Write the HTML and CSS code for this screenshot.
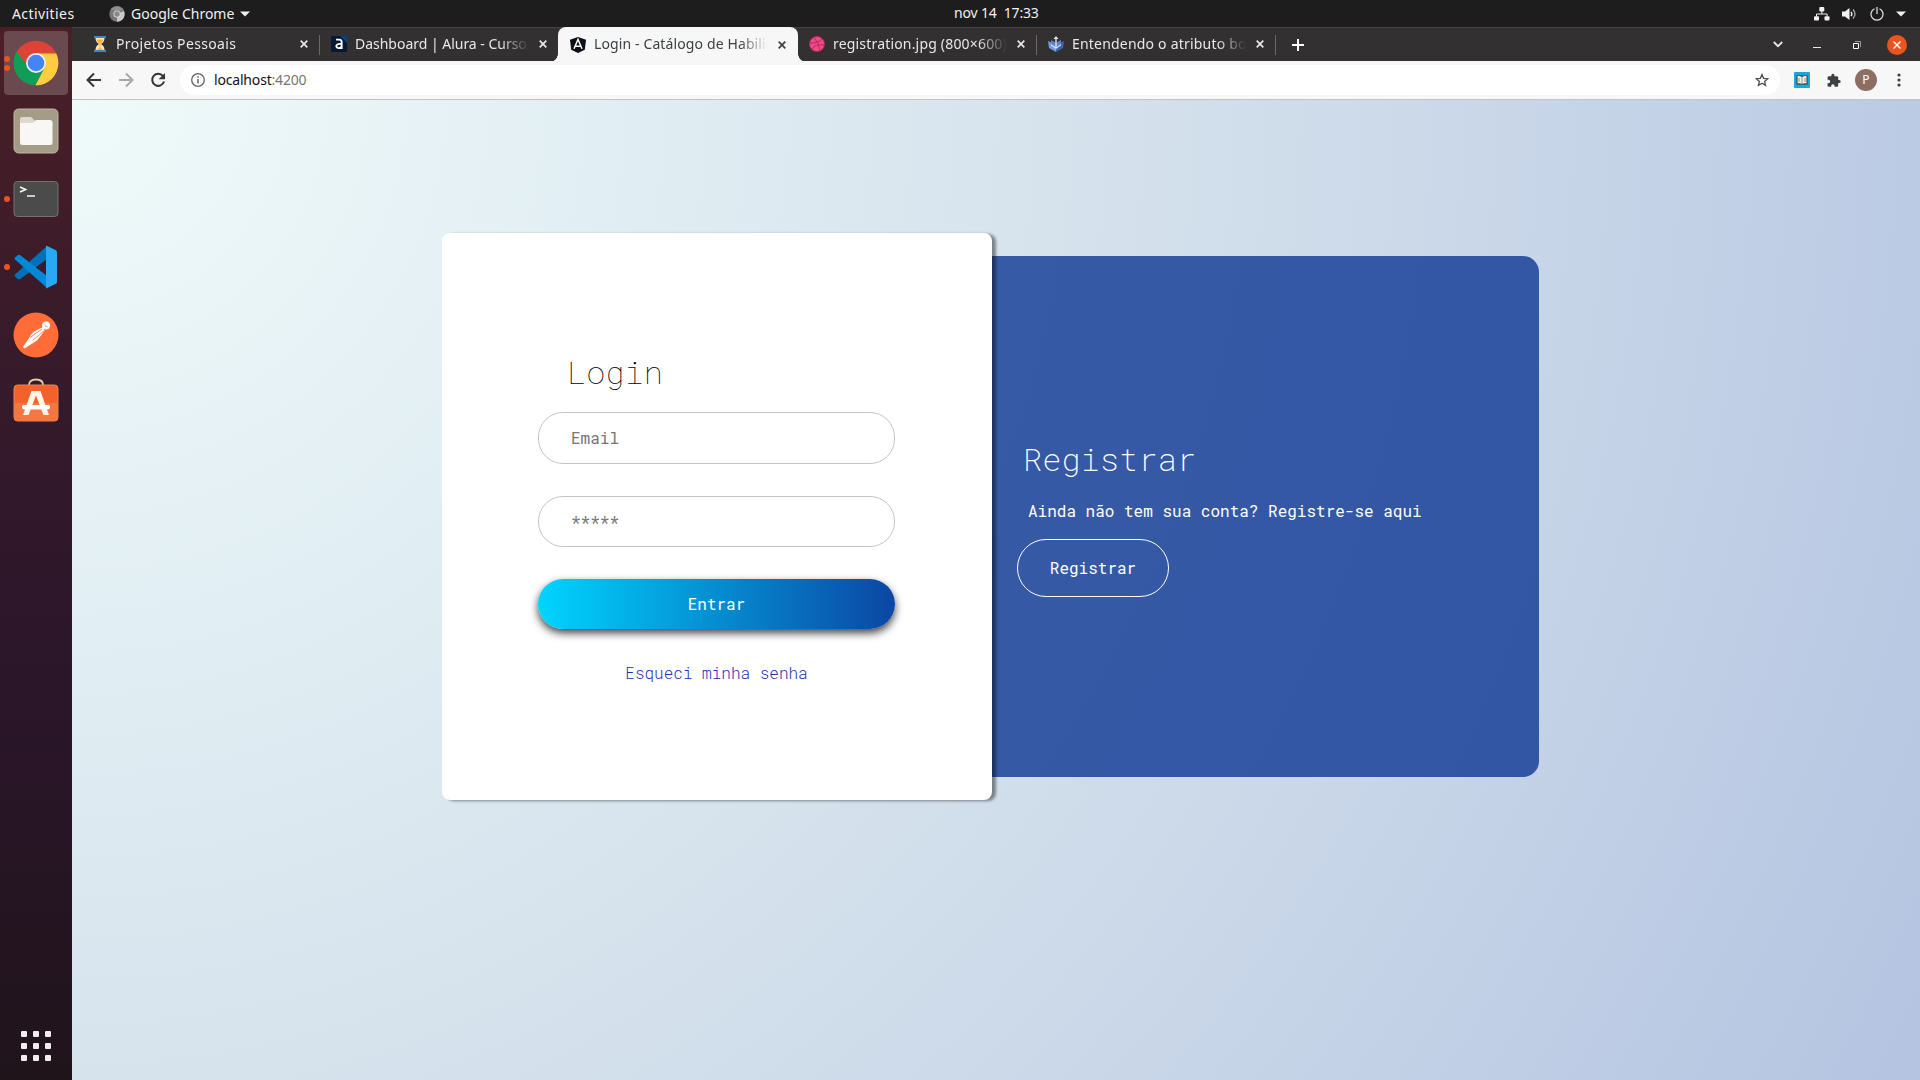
FILE: index.html
```html
<!DOCTYPE html>
<html lang="pt-BR">
<head>
<meta charset="utf-8">
<title>Login - Catálogo de Habilidades</title>
<link rel="stylesheet" href="styles.css">
</head>
<body>
<div class="desktop">
  <header class="topbar">
    <div class="topbar-left">
      <span class="activities">Activities</span>
      <svg class="app-icon" width="16" height="16" viewBox="0 0 16 16"><circle cx="8" cy="8" r="7.7" fill="#777"/><path d="M8 8 15 5A7.7 7.7 0 0 1 8 15.7z" fill="#c9c9c9"/><path d="M1.3 4.2A7.7 7.7 0 0 1 15 4.5H8z" fill="#8e8e8e"/><circle cx="8" cy="8" r="3.6" fill="#ddd"/><circle cx="8" cy="8" r="2.7" fill="#888"/></svg>
      <span class="app-name">Google Chrome</span>
      <svg class="caret" width="10" height="6" viewBox="0 0 10 6"><path d="M0 .5h10L5 5.5z" fill="#f2f2f2"/></svg>
    </div>
    <div class="clock">nov 14&nbsp; 17:33</div>
    <div class="topbar-right">
      <svg width="16" height="14" viewBox="0 0 16 14"><g fill="#f2f2f2"><rect x="5.3" y="0" width="5" height="4.5" rx="1"/><rect x="0" y="9.2" width="5" height="4.4" rx="1"/><rect x="10.5" y="9.2" width="5" height="4.4" rx="1"/></g><path d="M7.8 4v3M2.5 9.5V7h10.6v2.5" fill="none" stroke="#f2f2f2"/></svg>
      <svg width="16" height="14" viewBox="0 0 16 14"><path d="M0 4.5h3L7.5 1v12L3 9.5H0z" fill="#f2f2f2"/><path d="M9 4.8q1.7 2.2 0 4.4" fill="none" stroke="#f2f2f2" stroke-width="1.3"/><path d="M11 2.5q4 4.5 0 9" fill="none" stroke="#aaa" stroke-width="1.3"/></svg>
      <svg width="14" height="14" viewBox="0 0 14 14"><path d="M4.5 1.7a6 6 0 1 0 5 0M7 0v7" fill="none" stroke="#e6e6e6" stroke-width="1.2"/></svg>
      <svg width="10" height="6" viewBox="0 0 10 6"><path d="M0 .5h10L5 5.5z" fill="#f2f2f2"/></svg>
    </div>
  </header>

  <div class="workspace">
    <nav class="dock">
      <div class="dock-item dock-active">
        <span class="dots"><i></i><i></i></span>
        <svg width="46" height="46" viewBox="0 0 46 46"><circle cx="23" cy="23" r="22.3" fill="#db4437"/><path d="M3.7 11.8A22.3 22.3 0 0 0 22.5 45.3L31.5 29 15 26.5z" fill="#0f9d58"/><path d="M23 13.5H43.2A22.3 22.3 0 0 1 22.5 45.3L32 27z" fill="#ffcd40"/><circle cx="23" cy="23" r="10" fill="#f1f1f1"/><circle cx="23" cy="23" r="8.3" fill="#4285f4"/></svg>
      </div>
      <div class="dock-item">
        <svg width="46" height="46" viewBox="0 0 46 46"><rect x="1" y="1" width="44" height="44" rx="4.5" fill="#a59c87" stroke="#bdb6a4"/><path d="M7 13V11q0-2 2-2h9l4 4v5H7z" fill="#ded9cc"/><path d="M7 15h13l3-3h14q2.5 0 2.5 2.500V34.500q0 2.500-2.500 2.500H9.500Q7 37 7 34.500z" fill="#f8f7f5"/></svg>
      </div>
      <div class="dock-item">
        <span class="dots"><i></i></span>
        <svg width="46" height="38" viewBox="0 0 46 38"><rect x="1" y="1.5" width="44" height="35" rx="3.5" fill="#4b4b4b" stroke="#737373"/><path d="M7 7 12.5 9.5 7 12M14 16h8" fill="none" stroke="#f5f5f5" stroke-width="1.7"/></svg>
      </div>
      <div class="dock-item">
        <span class="dots"><i></i></span>
        <svg width="44" height="44" viewBox="0 0 44 44"><path d="M1 29.5q-.8 1 0 2l3 2.7q1 .7 2 0L33 14V1z" fill="#0070b8"/><path d="M1 14.5q-.8-1 0-2L4 10q1-.7 2 0L33 31v12z" fill="#0089d6"/><path d="M32 .5 41.500 5Q43 6 43 7v30q0 1-1.500 2L32 43.500z" fill="#2aa9f2"/></svg>
      </div>
      <div class="dock-item">
        <svg width="46" height="46" viewBox="0 0 46 46"><circle cx="23" cy="23" r="22.5" fill="#ff6c37"/><circle cx="33" cy="13.5" r="4" fill="#fff"/><path d="M30 15 21 19.500q-4 3.500-4.500 6L10 35l1.500 1.500L24 28.500 31.500 19z" fill="#fff"/><path d="M17 25.500 29 17M20 28 31 19M31.500 13.500l3 1.500" stroke="#ff6c37" stroke-width=".8"/></svg>
      </div>
      <div class="dock-item dock-software">
        <svg width="46" height="46" viewBox="0 0 46 46"><path d="M16 9V8q0-5.500 7-5.500T30 8v1" fill="none" stroke="#e9cfa0" stroke-width="1.8"/><rect x="1" y="8" width="44" height="36" rx="3.5" fill="#f1622c" stroke="#ef8354"/><path d="M1.500 26h43v14q0 3.500-3 3.500h-37q-3 0-3-3.500z" fill="#f3854f" opacity=".6"/><path d="M18.500 14h9L36 38h-5.500L23 18.500 15.500 38H10z" fill="#fff4ea"/><rect x="9" y="28" width="28" height="4.500" rx="2" fill="#fff"/></svg>
      </div>
      <div class="apps-grid"><i></i><i></i><i></i><i></i><i></i><i></i><i></i><i></i><i></i></div>
    </nav>

    <div class="browser">
      <div class="tabstrip">
        <div class="tab">
          <svg width="16" height="16" viewBox="0 0 16 16"><path d="M2 0h12v2H2zM2 14h12v2H2z" fill="#3b88c3"/><path d="M3.500 2h9q0 4-3.500 6 3.500 2 3.500 6h-9q0-4 3.500-6Q3.500 6 3.500 2z" fill="#ffe8b6"/><path d="M4.500 3.500h7Q11 6 8.500 7.500V12l3 2h-7l3-2V7.500Q5 6 4.500 3.500z" fill="#ffac33"/></svg>
          <span class="tab-title t1">Projetos Pessoais</span><svg class="x" width="8" height="8" viewBox="0 0 8 8"><path d="M.7.7l6.6 6.6M7.3.7.7 7.3"/></svg>
        </div>
        <div class="tab">
          <svg width="16" height="16" viewBox="0 0 16 16"><path d="M0 0h16v16H0z" fill="#051933"/><path d="M9 0h7v7z" fill="#0b3f82"/><path d="M5 3.700h3.500Q10.700 3.700 10.700 6.500V13M10.500 8C6.500 7.500 5 8.800 5.300 10.500s4 2.500 5.200 0" fill="none" stroke="#fff" stroke-width="1.8"/></svg>
          <span class="tab-title t2">Dashboard | Alura - Cursos</span><svg class="x" width="8" height="8" viewBox="0 0 8 8"><path d="M.7.7l6.6 6.6M7.3.7.7 7.3"/></svg>
        </div>
        <div class="tab tab-current">
          <svg width="16" height="16" viewBox="0 0 16 16"><path d="M8 0l8 2.700-1.200 10L8 16l-6.800-3.300L0 2.700z" fill="#0b1017"/><path d="M4 11.800 8 2.500l4 9.300M5.500 9.300h5" fill="none" stroke="#fff" stroke-width="1.5"/></svg>
          <span class="tab-title t3">Login - Catálogo de Habilidades</span><svg class="x" width="8" height="8" viewBox="0 0 8 8"><path d="M.7.7l6.6 6.6M7.3.7.7 7.3"/></svg>
        </div>
        <div class="tab">
          <svg width="16" height="16" viewBox="0 0 16 16"><circle cx="8" cy="8" r="7.5" fill="#ea4c89" stroke="#c32361"/><path d="M5 1.500Q10 7 11 14.500M1 7q8 .5 12-4M3 13.500Q6 7.500 15 9" fill="none" stroke="#c32361"/></svg>
          <span class="tab-title t4">registration.jpg (800×600)</span><svg class="x" width="8" height="8" viewBox="0 0 8 8"><path d="M.7.7l6.6 6.6M7.3.7.7 7.3"/></svg>
        </div>
        <div class="tab">
          <svg width="16" height="16" viewBox="0 0 16 16"><path d="M0 5l8 4v7l-7-4z" fill="#7b9bdc"/><path d="M16 5 8 9v7l7-4z" fill="#3f66b0"/><path d="M3 4l5 3 5-3v4l-5 3-5-3z" fill="#5d83cf"/><path d="M8 0l2.500 3H8.700v9H7.300V3H5.500zM3 8l5 3.500L13 8v1.200L8 13 3 9.200z" fill="#d9e3f5"/></svg>
          <span class="tab-title t5">Entendendo o atributo box</span><svg class="x" width="8" height="8" viewBox="0 0 8 8"><path d="M.7.7l6.6 6.6M7.3.7.7 7.3"/></svg>
        </div>
        <svg class="newtab" width="12" height="12" viewBox="0 0 12 12"><path d="M6 0v12M0 6h12" stroke="#fff" stroke-width="2"/></svg>
        <div class="window-controls">
          <svg width="10" height="7" viewBox="0 0 10 7"><path d="M.8 1 5 5.200 9.200 1" fill="none" stroke="#e8e8e8" stroke-width="1.8"/></svg>
          <svg width="8" height="7" viewBox="0 0 8 7"><path d="M0 6.500h8" stroke="#e8e8e8"/></svg>
          <svg width="8" height="8" viewBox="0 0 8 8"><path d="M.5 2.500h5v5h-5z" fill="none" stroke="#fff"/><path d="M2 .5h5.500V6" fill="none" stroke="#999"/></svg>
          <svg width="20" height="20" viewBox="0 0 20 20"><circle cx="10" cy="10" r="10" fill="#e95420"/><path d="M6.500 6.500l7 7M13.500 6.500l-7 7" stroke="#fff" stroke-width="1.4"/></svg>
        </div>
      </div>

      <div class="toolbar">
        <svg width="16" height="16" viewBox="0 0 16 16"><path d="M15 8H2M8 1.500 1.500 8 8 14.500" fill="none" stroke="#333639" stroke-width="2"/></svg>
        <svg width="16" height="16" viewBox="0 0 16 16"><path d="M1 8h13M8 1.500 14.500 8 8 14.500" fill="none" stroke="#a6a8ab" stroke-width="2"/></svg>
        <svg width="16" height="16" viewBox="0 0 16 16"><path d="M13 4.200A6 6 0 1 0 14 9.500" fill="none" stroke="#333639" stroke-width="2"/><path d="M15 1v6.300H8.700z" fill="#333639"/></svg>
        <div class="omnibox">
          <svg width="14" height="14" viewBox="0 0 14 14"><circle cx="7" cy="7" r="6.3" fill="none" stroke="#5f6368" stroke-width="1.3"/><path d="M7 6v4.500M7 3.300v1.500" stroke="#5f6368" stroke-width="1.5"/></svg>
          <span class="url">localhost<span class="port">:4200</span></span>
          <svg class="star" width="14" height="14" viewBox="0 0 14 14"><path d="M7 1.500 8.600 5.300l4.200.4-3.200 2.700 1 4L7 10.300l-3.600 2.100 1-4L1.200 5.700l4.200-.4z" fill="none" stroke="#4a4d51" stroke-width="1.3"/></svg>
        </div>
        <svg class="ext" width="16" height="16" viewBox="0 0 16 16"><rect width="16" height="16" rx="1" fill="#1fa3dc"/><path d="M2.500 3.500h11v9h-11z" fill="#333"/><path d="M3.500 4q2.500-.5 4.500 1 2-1.500 4.500-1v7.500Q10 11 8 12q-2-1-4.500-.5z" fill="#f3f0e6"/><path d="M8 5v7M5 6v4M11 6v4" stroke="#777" stroke-width=".8"/></svg>
        <svg class="puzzle" width="15" height="15" viewBox="0 0 24 24"><path d="M21 11h-1.500V7a2 2 0 0 0-2-2h-4V3.500a2.500 2.500 0 0 0-5 0V5H4.500a2 2 0 0 0-2 2v3.800H4a2.700 2.700 0 0 1 0 5.400H2.500V20a2 2 0 0 0 2 2h3.800v-1.500a2.700 2.700 0 0 1 5.400 0V22h3.800a2 2 0 0 0 2-2v-4H21a2.500 2.500 0 0 0 0-5z" fill="#3c4043"/></svg>
        <span class="avatar">P</span>
        <svg class="menu" width="4" height="14" viewBox="0 0 4 14"><g fill="#3c4043"><circle cx="2" cy="2" r="1.6"/><circle cx="2" cy="7" r="1.6"/><circle cx="2" cy="12" r="1.6"/></g></svg>
      </div>

      <main class="page">
        <section class="login-card">
          <h1 class="title">Login</h1>
          <form class="login-form">
            <input class="field" type="text" placeholder="Email">
            <input class="field field-password" type="text" placeholder="*****">
            <button class="submit" type="button">Entrar</button>
          </form>
          <a class="forgot">Esqueci minha senha</a>
        </section>
        <section class="register-card">
          <h2 class="title title-light">Registrar</h2>
          <p class="register-text">Ainda não tem sua conta? Registre-se aqui</p>
          <button class="register-button" type="button">Registrar</button>
        </section>
      </main>
    </div>
  </div>
</div>
</body>
</html>
```
FILE: styles.css
```css
* { box-sizing: border-box; }
body { margin: 0; font-family: "Noto Sans", sans-serif; font-size: 14px; }
svg { display: block; flex: none; }
.desktop { width: 1920px; height: 1080px; display: flex; flex-direction: column; overflow: hidden; }

.topbar { height: 27px; flex: none; background: #1d1d1d; color: #f0f0f0; display: grid; grid-template-columns: 942px auto 1fr; align-items: center; padding: 0 14px 0 12px; line-height: 26px; }
.topbar-left { display: flex; align-items: center; }
.activities { width: 97px; letter-spacing: .42px; }
.app-name { margin-left: 6px; width: 104px; }
.caret { margin-left: 5px; }
.clock { letter-spacing: -.15px; padding-bottom: 1px; }
.topbar-right { display: flex; align-items: center; justify-content: flex-end; gap: 12px; }

.workspace { flex: 1; display: flex; min-height: 0; }
.dock { width: 72px; flex: none; display: flex; flex-direction: column; gap: 4px; padding: 4px 4px 19px; background: linear-gradient(#4a1f26 0, #351a2b 35%, #2a1529 65%, #20141b); }
.dock-item { position: relative; height: 64px; flex: none; display: flex; align-items: center; justify-content: center; border-radius: 4px; }
.dock-active { background: #6a4a4f; }
.dock-software { padding-bottom: 7px; }
.dots { position: absolute; left: 0; top: 0; height: 64px; display: flex; flex-direction: column; justify-content: center; gap: 3px; }
.dots i { width: 6px; height: 6px; border-radius: 3px; background: #e95420; }
.apps-grid { margin: auto auto 0; display: grid; grid-template-columns: repeat(3, 6px); gap: 6px; }
.apps-grid i { height: 6px; border-radius: 1px; background: #f2eef0; }

.browser { flex: 1; display: flex; flex-direction: column; min-width: 0; }
.tabstrip { height: 34px; flex: none; background: #333031; border-top: 1px solid #454344; display: flex; align-items: center; padding-left: 8px; color: #e8e8e8; }
.tab { position: relative; width: 239px; height: 34px; flex: none; display: flex; align-items: center; padding: 0 11px 1px 12px; }
.tab::after { content: ""; position: absolute; right: -1px; top: 7px; height: 20px; width: 1px; background: #6a6869; }
.tab:nth-child(2)::after, .tab-current::after { display: none; }
.tab-title { width: 176px; margin: 0 0 0 8px; overflow: hidden; white-space: nowrap; line-height: 24px; -webkit-mask-image: linear-gradient(90deg, #000 145px, transparent 174px); mask-image: linear-gradient(90deg, #000 145px, transparent 174px); }
.t1 { letter-spacing: .36px; }
.t2 { letter-spacing: -.02px; }
.t3 { padding-bottom: 1px; letter-spacing: .12px; }
.t4 { letter-spacing: .18px; }
.t5 { letter-spacing: .2px; }
.x { margin-left: 8px; fill: none; stroke: currentColor; stroke-width: 1.7; }
.tab-current { align-self: flex-start; width: 240px; margin: -1px -1px 0 0; height: 35px; padding: 0 12px 0 12px; background: #f7f7f7; color: #3c4043; border-radius: 8px 8px 0 0; }
.tab-current::before { content: ""; position: absolute; left: -8px; right: -8px; bottom: 0; height: 8px; background: radial-gradient(circle at 0 0, transparent 7.5px, #f7f7f7 8px) left / 8px 8px no-repeat, radial-gradient(circle at 100% 0, transparent 7.5px, #f7f7f7 8px) right / 8px 8px no-repeat; }
.newtab { margin-left: 17px; }
.window-controls { margin-left: auto; padding-right: 13px; display: flex; align-items: center; }
.window-controls svg:nth-child(1) { margin-right: 30px; }
.window-controls svg:nth-child(2) { margin-right: 32px; }
.window-controls svg:nth-child(3) { margin-right: 26px; }

.toolbar { height: 39px; flex: none; background: #f7f7f7; border-bottom: 1px solid #c3c5c5; display: flex; align-items: center; padding: 0 19px 0 14px; }
.toolbar > svg:nth-child(1), .toolbar > svg:nth-child(2) { margin-right: 16px; }
.omnibox { flex: 1; height: 30px; margin-left: 14px; border-radius: 15px; background: #fff; display: flex; align-items: center; padding: 0 11px; }
.url { margin-left: 9px; padding-bottom: 1px; color: #111; letter-spacing: -.18px; }
.port { color: #757575; }
.star { margin-left: auto; }
.ext { margin-left: 14px; }
.puzzle { margin-left: 16px; }
.avatar { margin: 0 20px 0 14px; width: 22px; height: 22px; border-radius: 11px; background: #8d6e63; color: #fff; font-size: 12px; line-height: 22px; text-align: center; }

.page { flex: 1; display: flex; align-items: flex-start; padding: 133px 0 0 370px; background: radial-gradient(circle farthest-corner at 0 0, #effbfa, #d6e3ed 47%, #b4c4e1); font-family: "Roboto Mono", "DejaVu Sans Mono", monospace; font-size: 16px; }
.login-card { position: relative; width: 550px; height: 567px; padding: 118px 97px 0 96px; background: #fff; border-radius: 8px; box-shadow: 4px 1px 3px rgba(0, 0, 0, .42); }
.title { margin: 0 0 0 29px; font-size: 32px; font-weight: 100; line-height: 42px; color: #000; }
.login-form { margin-top: 19px; display: flex; flex-direction: column; }
.field { height: 52px; margin: 0 0 32px; padding: 0 32px 2px; border: 1px solid #c4c4c4; border-radius: 25px; background: #fff; font: inherit; }
.field::placeholder { color: #757575; }
.field-password { height: 51px; padding-bottom: 1px; }
.submit { height: 50px; padding: 0 0 2px; border: 0; border-radius: 25px; background: linear-gradient(90deg, #00d4ff, #0b46a3); box-shadow: 0 4px 8px rgba(0, 0, 0, .75); color: #fff; font: inherit; }
.forgot { display: block; margin-top: 34px; line-height: 20px; text-align: center; font-weight: 300; color: #2030b0; }
.register-card { width: 547px; height: 521px; margin-top: 23px; padding: 182px 25px 0; border-radius: 0 16px 16px 0; background: rgba(14, 55, 147, .8); color: #fff; }
.title-light { margin-left: 6px; color: #fff; font-weight: 200; }
.register-text { margin: 21px 0 18px 11px; line-height: 20px; }
.register-button { width: 152px; height: 58px; padding: 0 0 1px; border: 1px solid #fff; border-radius: 29px; background: transparent; color: #fff; font: inherit; }
```
